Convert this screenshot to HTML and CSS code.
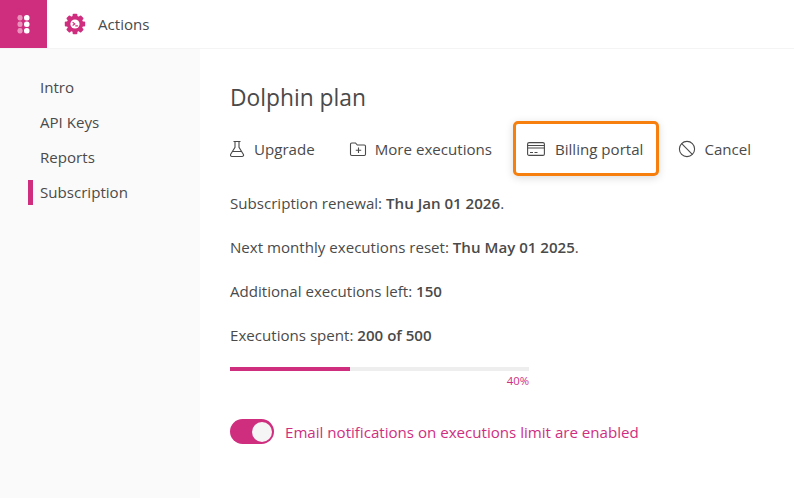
FILE: index.html
```html
<!DOCTYPE html>
<html lang="en">
<head>
<meta charset="utf-8">
<title>Actions - Subscription</title>
<link rel="stylesheet" href="styles.css">
</head>
<body>
<header class="topbar">
  <div class="brand">
    <svg width="13" height="19" viewBox="0 0 13 19">
      <g fill="#eb93bd"><rect x="0.500" y="0" width="5" height="5.500" rx="2.300"/><rect x="0.500" y="6.500" width="5" height="5.500" rx="2.300"/><rect x="0.500" y="13" width="5" height="5.500" rx="2.300"/></g>
      <g fill="#fff"><rect x="7" y="0" width="5.500" height="5.500" rx="2.500"/><rect x="7" y="6.500" width="5.500" height="5.500" rx="2.500"/><rect x="7" y="13" width="5.500" height="5.500" rx="2.500"/></g>
    </svg>
  </div>
  <div class="app">
    <svg width="22" height="22" viewBox="0 0 22 22">
      <g fill="#cf2e7f">
        <circle cx="11" cy="11" r="8.200"/>
        <rect x="8.600" y="0.800" width="4.800" height="20.400" rx="1"/>
        <rect x="8.600" y="0.800" width="4.800" height="20.400" rx="1" transform="rotate(45 11 11)"/>
        <rect x="8.600" y="0.800" width="4.800" height="20.400" rx="1" transform="rotate(90 11 11)"/>
        <rect x="8.600" y="0.800" width="4.800" height="20.400" rx="1" transform="rotate(135 11 11)"/>
      </g>
      <circle cx="11" cy="11" r="4.600" fill="#fff"/>
      <path d="M8.600 9.200l2.200 1.700-2.200 1.600M11.300 12.800h2.600" fill="none" stroke="#cf2e7f" stroke-width="1.200"/>
    </svg>
    <span>Actions</span>
  </div>
</header>
<div class="layout">
  <nav class="side">
    <a class="nav-item">Intro</a>
    <a class="nav-item">API Keys</a>
    <a class="nav-item">Reports</a>
    <a class="nav-item active">Subscription</a>
  </nav>
  <main class="content">
    <h1 class="title">Dolphin plan</h1>
    <div class="actions">
      <a class="action">
        <svg width="16" height="18" viewBox="2 0 16 18" fill="none" stroke="#4a4a4a" stroke-width="1.100"><path d="M5.500 1.500h7M7 1.500v5.800L2.700 14.200c-.7 1.200 0 2.300 1.300 2.300h10c1.300 0 2-1.100 1.300-2.300L11 7.300V1.500M4.800 11.500h8.400"/></svg>
        <span>Upgrade</span>
      </a>
      <a class="action">
        <svg width="18" height="18" viewBox="0 0 18 18" fill="none" stroke="#4a4a4a" stroke-width="1.100"><path d="M1.500 4.500c0-.8.500-1.500 1.300-1.500h3.700l1.800 2h7c.8 0 1.200.5 1.200 1.300v8c0 .8-.5 1.200-1.200 1.200H2.800c-.8 0-1.300-.5-1.300-1.200zM9.500 7.500v5.500M6.800 10.200h5.400"/></svg>
        <span>More executions</span>
      </a>
      <a class="action focused">
        <svg width="18" height="18" viewBox="0 0 18 18" fill="none" stroke="#4a4a4a" stroke-width="1.100"><rect x="0.600" y="2.600" width="16.800" height="12.800" rx="1.500"/><path d="M.6 5.500h16.800M.6 8h16.800M3 12.500h3M7.500 12.500h3"/></svg>
        <span>Billing portal</span>
      </a>
      <a class="action cancel">
        <svg width="18" height="18" viewBox="0 0 18 18" fill="none" stroke="#4a4a4a" stroke-width="1.100"><circle cx="9" cy="9" r="7.600"/><path d="M3.700 3.700l10.600 10.600"/></svg>
        <span>Cancel</span>
      </a>
    </div>
    <p class="line">Subscription renewal: <b>Thu Jan 01 2026</b>.</p>
    <p class="line">Next monthly executions reset: <b>Thu May 01 2025</b>.</p>
    <p class="line">Additional executions left: <b>150</b></p>
    <p class="line">Executions spent: <b>200 of 500</b></p>
    <div class="progress">
      <div class="track"><div class="fill" style="width:40%"></div></div>
      <div class="pct">40%</div>
    </div>
    <div class="notify">
      <span class="toggle"><span class="knob"></span></span>
      <span>Email notifications on executions limit are enabled</span>
    </div>
  </main>
</div>
</body>
</html>
```

FILE: styles.css
```css
* { box-sizing: border-box; }
html, body { margin: 0; height: 100%; }
body {
  width: 794px;
  height: 498px;
  overflow: hidden;
  background: #fff;
  color: #4a4a4a;
  font-family: "Open Sans", "Noto Sans", sans-serif;
  font-size: 15.100px;
  display: flex;
  flex-direction: column;
}
.topbar {
  height: 49px;
  display: flex;
  flex: none;
  border-bottom: 1px solid #f4f4f4;
}
.brand {
  width: 47px;
  height: 48px;
  background: #cf2e7f;
  display: flex;
  align-items: center;
  justify-content: center;
}
.app {
  display: flex;
  align-items: center;
  padding-left: 17px;
  gap: 12px;
}
.layout { flex: 1; display: flex; min-height: 0; }
.side {
  width: 200px;
  flex: none;
  background: #fafafa;
  padding: 26px 0 0 28px;
  display: flex;
  flex-direction: column;
  gap: 10px;
}
.nav-item {
  height: 25px;
  line-height: 25px;
  padding-left: 12px;
}
.nav-item.active {
  border-left: 5px solid #cf2e7f;
  padding-left: 7px;
}
.content { flex: 1; padding-left: 30px; }
.title {
  margin: 33px 0 0;
  font-size: 22.800px;
  font-weight: 400;
  line-height: 32px;
}
.actions {
  display: flex;
  align-items: center;
  margin: 7px 0 0 -17px;
}
.action {
  display: flex;
  align-items: center;
  gap: 8px;
  height: 55px;
  padding: 0 17px;
}
.focused {
  border: 3px solid #f77f0e;
  border-radius: 5px;
  padding: 0 13px 0 11px;
  gap: 10px;
  margin-left: 4px;
  box-shadow: 0 2px 9px rgba(0,0,0,.14);
}
.cancel { padding-left: 19px; }
.line { margin: 0 0 25px; line-height: 19px; }
.actions + .line { margin-top: 18px; }
.line b { font-weight: 600; }
.progress { width: 299px; margin-top: -3px; }
.track { height: 4px; background: #eeeeee; }
.fill { height: 4px; background: #cf2e7f; }
.pct {
  text-align: right;
  font-size: 11.300px;
  line-height: 14px;
  margin-top: 3px;
  color: #cf2e7f;
}
.notify {
  display: flex;
  align-items: center;
  gap: 11px;
  margin-top: 31px;
  color: #cf2e7f;
}
.toggle {
  width: 44px;
  height: 25px;
  background: #cf2e7f;
  border-radius: 13px;
  display: flex;
  align-items: center;
  justify-content: flex-end;
  padding-right: 2px;
}
.knob { width: 20px; height: 20px; border-radius: 50%; background: #f5f5f5; }
```
